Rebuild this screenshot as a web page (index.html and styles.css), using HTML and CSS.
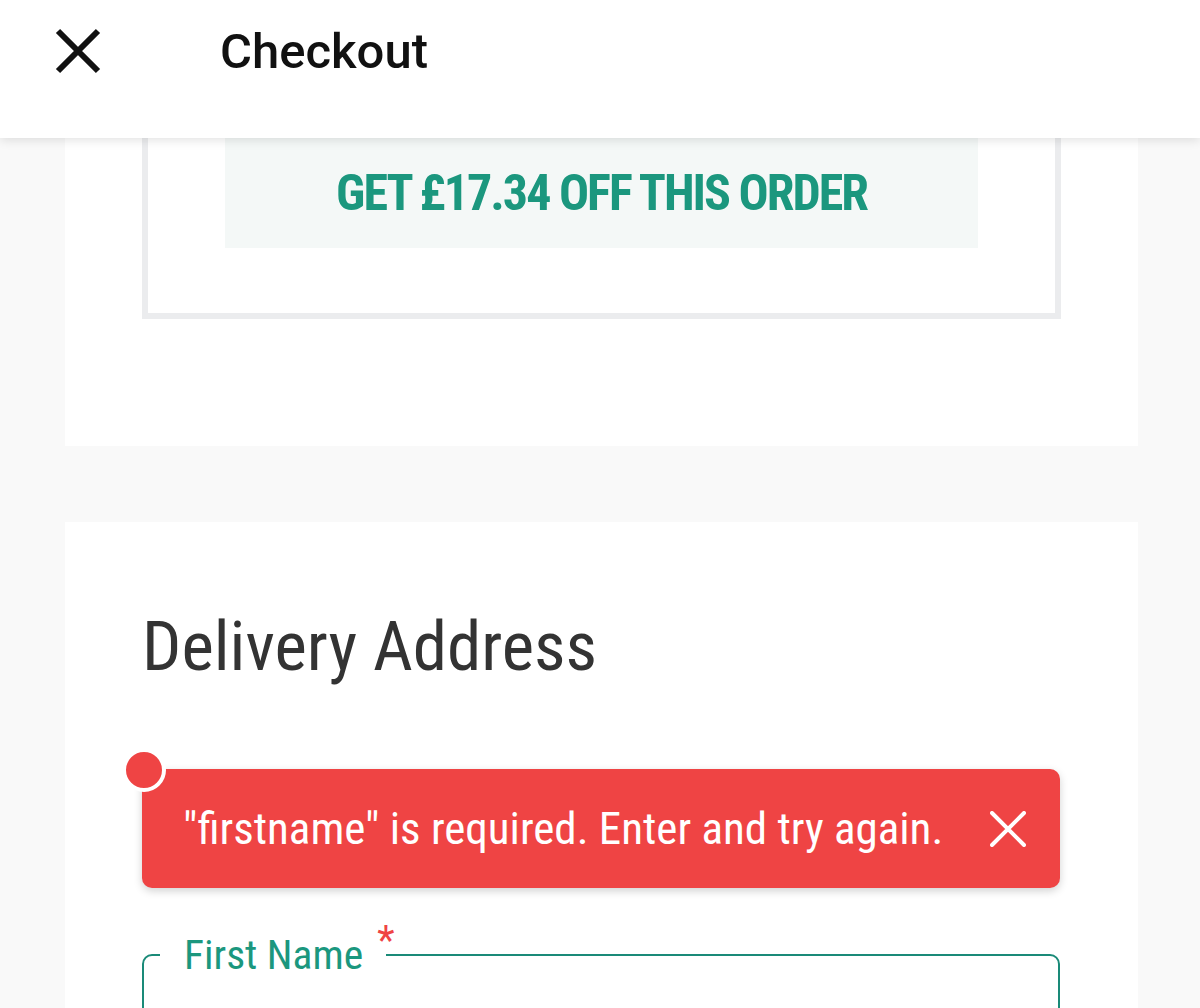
FILE: index.html
```html
<html>
<head>
<title>Checkout</title>
<link rel="stylesheet" href="styles.css">
</head>
<body>
<header class="topbar">
<button class="close" aria-label="Close">
<svg width="46" height="46" viewBox="0 0 46 46"><path d="M3 3 L43 43 M43 3 L3 43" stroke="#111" stroke-width="6" fill="none"/></svg>
</button>
<h1 class="title">Checkout</h1>
</header>

<section class="card card-offer">
<div class="promo">
<div class="offer">GET £17.34 OFF THIS ORDER</div>
</div>
</section>

<section class="card card-address">
<h2 class="heading">Delivery Address</h2>

<div class="alert">
<span class="alert-dot"></span>
<span class="alert-text">"firstname" is required. Enter and try again.</span>
<button class="alert-close" aria-label="Dismiss">
<svg width="36" height="36" viewBox="0 0 36 36"><path d="M2 2 L34 34 M34 2 L2 34" stroke="#fff" stroke-width="4" stroke-linecap="round" fill="none"/></svg>
</button>
</div>

<fieldset class="field">
<legend class="field-label">First Name<span class="req">*</span></legend>
<input class="field-input" type="text" name="firstname">
</fieldset>
</section>
</body>
</html>
```

FILE: styles.css
```css
body {
    margin: 0;
    background-color: #f9f9f9;
    font-family: "Roboto Condensed", "Liberation Sans Narrow", "DejaVu Sans Condensed", Roboto, sans-serif;
    color: #333;
}
.topbar {
    position: relative;
    z-index: 2;
    height: 138px;
    background-color: #fff;
    box-shadow: 0 2px 10px rgba(0, 0, 0, 0.12);
    display: flex;
    align-items: center;
    padding-left: 55px;
}
.close {
    border: 0;
    background: none;
    padding: 0;
    width: 46px;
    height: 46px;
    margin-top: -36px;
}
.title {
    margin: -36px 0 0 119px;
    font-family: Roboto, sans-serif;
    font-weight: 500;
    font-size: 49px;
    color: #111;
}
.card {
    background-color: #fff;
    margin: 0 62px 0 65px;
}
.card-offer {
    padding: 0 77px 127px 77px;
}
.promo {
    border: 6px solid #ebecee;
    border-top: 0;
    padding: 0 77px 65px 77px;
}
.offer {
    background-color: #f4f8f7;
    height: 110px;
    display: flex;
    align-items: center;
    justify-content: center;
    color: #1b977e;
    font-weight: 700;
    font-size: 50px;
    letter-spacing: -2px;
}
.card-address {
    margin-top: 76px;
    padding: 84px 78px 0 77px;
    height: 402px;
    overflow: hidden;
}
.heading {
    margin: 0 0 82px 0;
    font-weight: 400;
    font-size: 69px;
    color: #333;
}
.alert {
    position: relative;
    height: 119px;
    background-color: #ef4444;
    border-radius: 10px;
    box-shadow: 0 3px 8px rgba(0, 0, 0, 0.18);
    display: flex;
    align-items: center;
    padding: 0 34px 0 41px;
    color: #fff;
}
.alert-dot {
    position: absolute;
    left: -20px;
    top: -21px;
    width: 36px;
    height: 36px;
    border-radius: 50%;
    background-color: #ef4444;
    border: 4px solid #fff;
}
.alert-text {
    flex: 1;
    font-size: 45px;
}
.alert-close {
    border: 0;
    background: none;
    padding: 0;
    width: 36px;
    height: 36px;
}
.field {
    margin: 42px 0 0 0;
    border: 2px solid #1a8a78;
    border-radius: 10px;
    padding: 0 20px 30px 20px;
    height: 120px;
}
.field-label {
    margin-left: -4px;
    padding: 0 0 0 24px;
    color: #1b977e;
    font-size: 41.5px;
    white-space: nowrap;
}
.req {
    color: #ef4444;
    font-size: 40px;
    vertical-align: top;
    position: relative;
    top: -13px;
    margin-left: 14px;
    margin-right: -8px;
}
.field-input {
    border: 0;
    outline: 0;
    width: 100%;
    font-size: 40px;
    background: none;
}
```
